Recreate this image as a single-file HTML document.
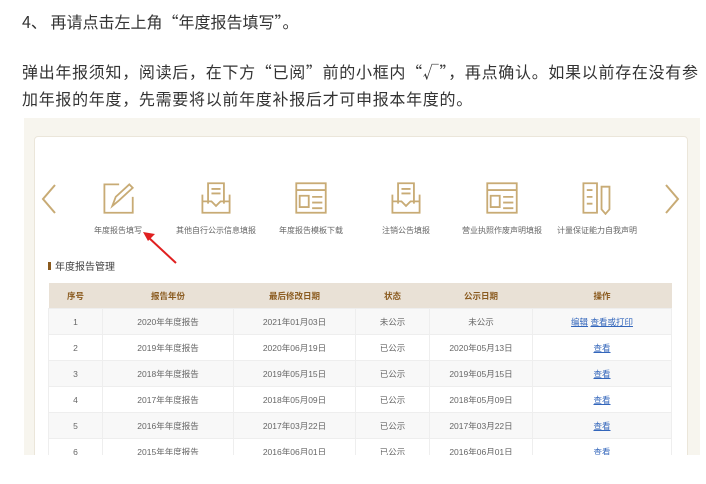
<!DOCTYPE html><html><head><meta charset="utf-8"><style>
body{margin:0;width:706px;height:484px;background:#fff;font-family:"Liberation Sans","Noto Sans CJK SC",sans-serif;position:relative;overflow:hidden;color:#333}
.t{position:absolute;left:22px;font-size:16px;white-space:nowrap;line-height:20px;font-family:"Noto Sans CJK SC",sans-serif}
#img{position:absolute;left:24px;top:118px;width:676px;height:337px;background:#f7f5ee;overflow:hidden}
#card{position:absolute;left:10px;top:18px;width:652px;height:340px;background:#fff;border:1px solid #ebe6da;border-radius:4px}
.ic{position:absolute;top:44px;width:100px;text-align:center}
.ic svg{display:block;margin:0 auto}
.ic span{display:block;font-size:8px;color:#666;margin-top:10px;white-space:nowrap}
table{position:absolute;left:13px;top:146px;width:624px;border-collapse:collapse;font-size:8.5px;color:#666}
th{background:#e9e1d6;color:#8a5a1e;height:25px;padding:0;font-weight:bold}
td{height:25px;padding:0;line-height:10px;text-align:center;border:1px solid #eee}
tr:nth-child(even) td{background:#f8f8f8}
a{color:#3366bb;text-decoration:underline}
</style></head><body>
<div class="t" style="top:11px">4、 再请点击左上角“年度报告填写”。</div>
<div class="t" style="top:61px;letter-spacing:0.7px">弹出年报须知，阅读后，在下方“已阅”前的小框内“√”，再点确认。如果以前存在没有参</div>
<div class="t" style="top:88px;letter-spacing:0.7px">加年报的年度，先需要将以前年度补报后才可申报本年度的。</div>
<div id="img"><div id="card">
<svg style="position:absolute;left:5px;top:46px" width="18" height="32"><path d="M15 2L3 16L15 30" fill="none" stroke="#c8ab75" stroke-width="2"/></svg>
<svg style="position:absolute;left:628px;top:46px" width="18" height="32"><path d="M3 2L15 16L3 30" fill="none" stroke="#c8ab75" stroke-width="2"/></svg>
<div class="ic" style="left:33px"><svg width="34" height="34" viewBox="0 0 30 30" fill="none" stroke="#c8ab75" stroke-width="1.6"><path d="M16 3H3v25h25V14"/><path d="M10 22l3-8 12-11 3 3-12 11z"/></svg><span>年度报告填写</span></div>
<div class="ic" style="left:131px"><svg width="34" height="34" viewBox="0 0 30 30" fill="none" stroke="#c8ab75" stroke-width="1.6"><path d="M3 12v16h24V12"/><path d="M3 18h8l4 4 4-4h8"/><path d="M8 20V2h14v18"/><path d="M11 7h8M11 11h8"/></svg><span>其他自行公示信息填报</span></div>
<div class="ic" style="left:226px"><svg width="34" height="34" viewBox="0 0 30 30" fill="none" stroke="#c8ab75" stroke-width="1.6"><rect x="2" y="2" width="26" height="26"/><path d="M2 8h26M5 13h8v10H5zM16 14h9M16 19h9M16 24h9"/></svg><span>年度报告模板下载</span></div>
<div class="ic" style="left:321px"><svg width="34" height="34" viewBox="0 0 30 30" fill="none" stroke="#c8ab75" stroke-width="1.6"><path d="M3 12v16h24V12"/><path d="M3 18h8l4 4 4-4h8"/><path d="M8 20V2h14v18"/><path d="M11 7h8M11 11h8"/></svg><span>注销公告填报</span></div>
<div class="ic" style="left:417px"><svg width="34" height="34" viewBox="0 0 30 30" fill="none" stroke="#c8ab75" stroke-width="1.6"><rect x="2" y="2" width="26" height="26"/><path d="M2 8h26M5 13h8v10H5zM16 14h9M16 19h9M16 24h9"/></svg><span>营业执照作废声明填报</span></div>
<div class="ic" style="left:512px"><svg width="34" height="34" viewBox="0 0 30 30" fill="none" stroke="#c8ab75" stroke-width="1.6"><path d="M3 2h12v26H3zM6 8h5M6 14h5M6 20h5M19 5h7v20l-3.5 4-3.5-4z"/></svg><span>计量保证能力自我声明</span></div>
<svg style="position:absolute;left:105px;top:90px" width="40" height="40"><path d="M36 36L8 10" stroke="#e02020" stroke-width="2"/><path d="M3 5l12 2-7 7z" fill="#e02020"/></svg>
<div style="position:absolute;left:13px;top:125px;width:3px;height:8px;background:#8a5a1e"></div>
<div style="position:absolute;left:20px;top:121px;font-size:10px;color:#444">年度报告管理</div>
<table><tr><th style="width:54px">序号</th><th style="width:131px">报告年份</th><th style="width:122px">最后修改日期</th><th style="width:74px">状态</th><th style="width:103px">公示日期</th><th>操作</th></tr>
<tr><td>1</td><td>2020年年度报告</td><td>2021年01月03日</td><td>未公示</td><td>未公示</td><td><a>编辑</a> <a>查看或打印</a></td></tr>
<tr><td>2</td><td>2019年年度报告</td><td>2020年06月19日</td><td>已公示</td><td>2020年05月13日</td><td><a>查看</a></td></tr>
<tr><td>3</td><td>2018年年度报告</td><td>2019年05月15日</td><td>已公示</td><td>2019年05月15日</td><td><a>查看</a></td></tr>
<tr><td>4</td><td>2017年年度报告</td><td>2018年05月09日</td><td>已公示</td><td>2018年05月09日</td><td><a>查看</a></td></tr>
<tr><td>5</td><td>2016年年度报告</td><td>2017年03月22日</td><td>已公示</td><td>2017年03月22日</td><td><a>查看</a></td></tr>
<tr><td>6</td><td>2015年年度报告</td><td>2016年06月01日</td><td>已公示</td><td>2016年06月01日</td><td><a>查看</a></td></tr>
</table></div></div>
</body></html>
